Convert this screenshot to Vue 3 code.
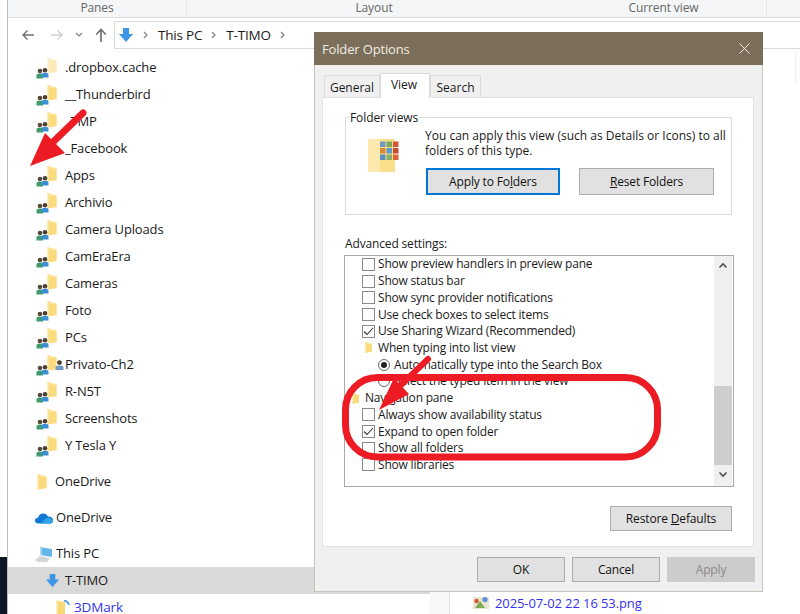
<script setup>
const shared = ['.dropbox.cache','__Thunderbird','_TMP','_Facebook','Apps','Archivio','Camera Uploads','CamEraEra','Cameras','Foto','PCs','Privato-Ch2','R-N5T','Screenshots','Y Tesla Y']
const settings = [
  { t: 'Show preview handlers in preview pane', k: 'box' },
  { t: 'Show status bar', k: 'box' },
  { t: 'Show sync provider notifications', k: 'box' },
  { t: 'Use check boxes to select items', k: 'box' },
  { t: 'Use Sharing Wizard (Recommended)', k: 'check' },
  { t: 'When typing into list view', k: 'folder' },
  { t: 'Automatically type into the Search Box', k: 'radioOn' },
  { t: 'Select the typed item in the view', k: 'radio' },
  { t: 'Navigation pane', k: 'head' },
  { t: 'Always show availability status', k: 'box' },
  { t: 'Expand to open folder', k: 'check' },
  { t: 'Show all folders', k: 'box' },
  { t: 'Show libraries', k: 'box' }
]
const thumbs = [
  ['#6f9cc6', '#7aa860', '#d6543a'],
  ['#d98a3a', '#5e9ac6', '#c94a32'],
  ['#5f8fc0', '#86b06a', '#d8663c']
]
</script>

<template>
  <div class="screen">
    <svg class="defs" width="0" height="0">
      <symbol id="folder" viewBox="0 0 11 16">
        <path d="M1 0.5 L10.5 2 V14 L1 15.5 Z" fill="#fde49a" />
        <path d="M1 0.5 L4 0.5 V3 L10.5 3.5 V14 L1 15.5 Z" fill="#f9da7c" />
        <path d="M1 0.5 L2.5 1 V15 L1 15.5 Z" fill="#fdeeb8" />
      </symbol>
      <symbol id="people" viewBox="0 0 13 12">
        <circle cx="4" cy="4" r="2.3" fill="#5b4a3a" />
        <path d="M0.5 11.5 V8.5 Q0.5 6.5 4 6.5 Q7 6.5 7 8.5 V11.5 Z" fill="#3f9a6a" />
        <circle cx="9" cy="3.2" r="2.3" fill="#4a4038" />
        <path d="M5.5 10.5 V7.8 Q5.5 5.8 9 5.8 Q12.5 5.8 12.5 7.8 V10.5 Z" fill="#3c8fd0" />
      </symbol>
      <symbol id="drive" viewBox="0 0 16 16">
        <path d="M5 1 H11 V7 H15 L8 15 L1 7 H5 Z" fill="#3e96e6" />
      </symbol>
    </svg>

    <div class="strip"><div class="strip-dark"></div></div>

    <div class="window">
      <div class="ribbon">
        <div class="rib rib-a">Panes</div>
        <div class="rib rib-b">Layout</div>
        <div class="rib rib-c">Current view</div>
      </div>

      <div class="navbar">
        <svg class="nav-ic" width="14" height="12" viewBox="0 0 14 12"><path d="M13 6 H2 M6.5 1.5 L2 6 L6.5 10.5" fill="none" stroke="#707070" stroke-width="1.4" /></svg>
        <svg class="nav-ic fwd" width="14" height="12" viewBox="0 0 14 12"><path d="M1 6 H12 M7.5 1.5 L12 6 L7.5 10.5" fill="none" stroke="#cfcfcf" stroke-width="1.4" /></svg>
        <svg class="nav-ic chev" width="8" height="6" viewBox="0 0 8 6"><path d="M1 1 L4 4 L7 1" fill="none" stroke="#808080" stroke-width="1.2" /></svg>
        <svg class="nav-ic up" width="12" height="14" viewBox="0 0 12 14"><path d="M6 14 V2 M1.2 6.5 L6 1.5 L10.8 6.5" fill="none" stroke="#707070" stroke-width="1.7" /></svg>
        <div class="address">
          <svg class="addr-ic" width="16" height="16"><use href="#drive" /></svg>
          <svg class="sep" width="6" height="8" viewBox="0 0 6 8"><path d="M1 1 L4 4 L1 7" fill="none" stroke="#808080" stroke-width="1.2" /></svg>
          <span>This PC</span>
          <svg class="sep" width="6" height="8" viewBox="0 0 6 8"><path d="M1 1 L4 4 L1 7" fill="none" stroke="#808080" stroke-width="1.2" /></svg>
          <span>T-TIMO</span>
          <svg class="sep" width="6" height="8" viewBox="0 0 6 8"><path d="M1 1 L4 4 L1 7" fill="none" stroke="#808080" stroke-width="1.2" /></svg>
        </div>
      </div>

      <div class="main">
        <div class="tree">
          <div v-for="(n, i) in shared" :key="n" class="row row-shared" :class="{ ghost: i === 0 }">
            <span class="ic-shared">
              <svg class="f" width="11" height="16"><use href="#folder" /></svg>
              <svg class="p" width="13" height="12"><use href="#people" /></svg>
              <svg v-if="n === 'Privato-Ch2'" class="p2" width="9" height="10" viewBox="0 0 9 10">
                <circle cx="4.5" cy="2.6" r="2.4" fill="#4a4038" />
                <path d="M0.5 10 V7.5 Q0.5 5.5 4.5 5.5 Q8.5 5.5 8.5 7.5 V10 Z" fill="#6f9ac4" />
              </svg>
            </span>
            <span>{{ n }}</span>
          </div>
          <div class="row row-top gap-a">
            <svg class="ic-top" width="11" height="16"><use href="#folder" /></svg>
            <span>OneDrive</span>
          </div>
          <div class="row row-top gap-a">
            <svg class="ic-cloud" width="18" height="12" viewBox="0 0 18 12">
              <path d="M3.5 11.5 Q0 11.5 0 8.5 Q0 6 3 5.8 Q4.5 1 9 1.5 Q12 2 13 4.5 Q18 4.5 18 8.5 Q18 11.5 15 11.5 Z" fill="#0f78d4" />
              <path d="M6 11.5 L11 6 Q15 4.5 18 8.5 Q18 11.5 15 11.5 Z" fill="#2fa3ea" />
            </svg>
            <span>OneDrive</span>
          </div>
          <div class="row row-top gap-a">
            <svg class="ic-pc" width="18" height="16" viewBox="0 0 18 16">
              <path d="M5 1 L17 3 V11 L5 9 Z" fill="#67b6ea" />
              <path d="M5 1 L7 1.3 V9.3 L5 9 Z" fill="#a7d7f3" />
              <path d="M0 14 L5 10 L15 12 L12 16 H3 Z" fill="#d3d6d9" />
            </svg>
            <span>This PC</span>
          </div>
          <div class="row row-sel">
            <svg class="ic-drive" width="15" height="15"><use href="#drive" /></svg>
            <span>T-TIMO</span>
          </div>
          <div class="row row-link">
            <svg class="f" width="15" height="16" viewBox="0 0 15 16">
              <path d="M1 0.5 L10 2 V14 L1 15.5 Z" fill="#f8d775" />
              <path d="M1 0.5 L2.5 1 V15 L1 15.5 Z" fill="#fdeeb8" />
              <path d="M9 0.5 Q13 1 14 5" stroke="#3e96e6" stroke-width="1.6" fill="none" />
            </svg>
            <span>3DMark</span>
          </div>
        </div>
        <div class="tree-gutter"></div>
        <div class="files">
          <div class="top-line"></div>
          <div class="file">
            <svg width="16" height="14" viewBox="0 0 16 14">
              <rect x="0" y="1" width="16" height="12" fill="#e8e4d2" />
              <path d="M2 12 L7 5 L12 12 Z" fill="#7fa84f" />
              <circle cx="3.5" cy="5" r="2.2" fill="#d8552c" />
              <circle cx="12" cy="3.5" r="2.6" fill="#5f8fd8" />
            </svg>
            <span>2025-07-02 22 16 53.png</span>
          </div>
        </div>
      </div>
    </div>

    <div class="dialog">
      <div class="title">
        <span>Folder Options</span>
        <svg width="11" height="11" viewBox="0 0 11 11"><path d="M0.5 0.5 L10.5 10.5 M10.5 0.5 L0.5 10.5" stroke="#efeae0" stroke-width="1" /></svg>
      </div>
      <div class="tabs">
        <div class="tab">General</div>
        <div class="tab tab-on">View</div>
        <div class="tab">Search</div>
      </div>
      <div class="panel">
        <div class="group">
          <div class="legend">Folder views</div>
          <div class="group-body">
            <svg class="gicon" width="32" height="34" viewBox="0 0 32 34">
              <rect x="0" y="1" width="27" height="33" fill="#fbe08c" />
              <rect x="0" y="1" width="12" height="33" fill="#fde9ad" />
              <g v-for="(r, ri) in thumbs" :key="ri">
                <rect v-for="(c, ci) in r" :key="ci" :x="12 + ci * 6.5" :y="3.5 + ri * 6.5" width="5.5" height="5.5" :fill="c" />
              </g>
            </svg>
            <div class="gtext">
              <p>You can apply this view (such as Details or Icons) to all<br />folders of this type.</p>
              <div class="gbtns">
                <button class="btn btn-wide btn-def">Apply to Fo<u>l</u>ders</button>
                <button class="btn btn-wide"><u>R</u>eset Folders</button>
              </div>
            </div>
          </div>
        </div>
        <div class="adv">Advanced settings:</div>
        <div class="list">
          <div class="items">
            <div v-for="s in settings" :key="s.t" class="item" :class="'k-' + s.k">
              <span v-if="s.k === 'box' || s.k === 'check'" class="cb">
                <svg v-if="s.k === 'check'" width="11" height="9" viewBox="0 0 11 9"><path d="M1 4.5 L4 7.5 L10 1" fill="none" stroke="#333" stroke-width="1.1" /></svg>
              </span>
              <svg v-else-if="s.k === 'folder' || s.k === 'head'" class="mini" width="9" height="11"><use href="#folder" /></svg>
              <span v-else class="rb" :class="{ on: s.k === 'radioOn' }"></span>
              <span>{{ s.t }}</span>
            </div>
          </div>
          <div class="sb">
            <svg width="10" height="7" viewBox="0 0 10 7"><path d="M1.5 5.5 L5 2 L8.5 5.5" fill="none" stroke="#505050" stroke-width="1.6" /></svg>
            <div class="sb-track"><div class="sb-thumb"></div></div>
            <svg width="10" height="7" viewBox="0 0 10 7"><path d="M1.5 1.5 L5 5 L8.5 1.5" fill="none" stroke="#505050" stroke-width="1.6" /></svg>
          </div>
        </div>
        <div class="restore"><button class="btn btn-restore">Restore <u>D</u>efaults</button></div>
      </div>
      <div class="foot">
        <button class="btn btn-foot">OK</button>
        <button class="btn btn-foot">Cancel</button>
        <button class="btn btn-foot btn-off">Apply</button>
      </div>
    </div>

    <svg class="marks" width="800" height="614" viewBox="0 0 800 614">
      <path d="M83 113 L52 143" stroke="#ed1c24" stroke-width="7" stroke-linecap="round" fill="none" />
      <path d="M30 166 L45 133 L65 153 Z" fill="#ed1c24" />
      <path d="M428 359 L400 386" stroke="#ed1c24" stroke-width="6" stroke-linecap="round" fill="none" />
      <path d="M379 410 L394 378 L409 394 Z" fill="#ed1c24" />
      <rect x="345.5" y="377.5" width="312" height="79.5" rx="32" ry="32" fill="none" stroke="#ed1c24" stroke-width="7" />
    </svg>
  </div>
</template>

<style>
html, body { margin: 0; background: #fff; }
</style>

<style scoped>
.screen {
  position: relative;
  width: 800px;
  height: 614px;
  overflow: hidden;
  display: flex;
  background: #fff;
  font-family: "Open Sans", "Noto Sans", sans-serif;
  color: #1a1a1a;
}
.defs { position: absolute; }
.strip { width: 7px; display: flex; flex-direction: column; justify-content: flex-end; flex: none; }
.strip-dark { height: 57px; background: #0e1628; }
.window { flex: 1; min-width: 0; display: flex; flex-direction: column; border-left: 1px solid #bdbdbd; }

.ribbon {
  height: 17px;
  display: flex;
  background: #f5f6f7;
  border-bottom: 1px solid #dedede;
  font-size: 12px;
  letter-spacing: -0.1px;
  color: #666;
  line-height: 16px;
}
.rib { text-align: center; border-right: 1px solid #e8e8e8; flex: none; }
.rib-a { width: 178px; }
.rib-b { width: 374px; border-right: 0; }
.rib-c { width: 205px; }

.navbar {
  height: 32px;
  box-sizing: border-box;
  padding-top: 2px;
  display: flex;
  align-items: center;
}
.nav-ic { flex: none; }
.nav-ic:first-child { margin-left: 13px; }
.fwd { margin-left: 15px; }
.chev { margin-left: 11px; }
.up { margin-left: 12px; }
.address {
  margin-left: 7px;
  height: 26px;
  flex: 1;
  display: flex;
  align-items: center;
  border: 1px solid #d9d9d9;
  border-right: 0;
  font-size: 13.5px;
  letter-spacing: -0.2px;
}
.addr-ic { margin-left: 3px; }
.sep { margin: 0 9px 0 9px; }

.main { flex: 1; min-height: 0; display: flex; }
.tree { width: 422px; flex: none; padding-top: 4px; font-size: 13px; letter-spacing: -0.15px; line-height: 27px; }
.row { height: 27px; display: flex; align-items: center; white-space: nowrap; }
.row-shared { padding-left: 28px; }
.ghost .f { opacity: 0.55; }
.ic-shared { position: relative; width: 29px; height: 27px; flex: none; }
.ic-shared .f { position: absolute; left: 10px; top: 4px; }
.ic-shared .p { position: absolute; left: 0; top: 13px; }
.ic-shared .p2 { position: absolute; left: 19px; top: 9px; }
.row-top { padding-left: 27px; }
.gap-a { margin-top: 9px; }
.ic-top { margin: 0 8px 0 1px; }
.ic-cloud { margin: 0 3px 0 0; }
.ic-pc { margin: 0 3px 0 0; }
.row-sel { background: #d9d9d9; padding-left: 37px; }
.ic-drive { margin-right: 5px; }
.row-link { padding-left: 47px; color: #3333f0; font-size: 13.5px; }
.row-link .f { margin-right: 4px; }
.tree-gutter { width: 19px; flex: none; background: #f7f7f7; }
.files { flex: 1; display: flex; flex-direction: column; justify-content: space-between; font-size: 13px; letter-spacing: -0.1px; color: #3333f0; border-left: 1px solid #e4e4e4; }
.top-line { margin: 2px 0 0 345px; width: 1px; height: 32px; background: #f0f0f0; }
.file { display: flex; align-items: center; gap: 6px; padding: 0 0 2px 23px; white-space: nowrap; }

.dialog {
  position: absolute;
  left: 314px;
  top: 32px;
  width: 449px;
  height: 560px;
  box-sizing: border-box;
  background: #f0f0f0;
  border: 1px solid #c8c4ba;
  border-top: 0;
  display: flex;
  flex-direction: column;
  font-size: 12px;
}
.title {
  height: 33px;
  margin: 0 -1px;
  flex: none;
  background: #7b6f5b;
  color: #f0ece2;
  display: flex;
  align-items: center;
  justify-content: space-between;
  padding: 0 13px 0 8px;
  font-size: 13px;
  letter-spacing: -0.15px;
}
.tabs { display: flex; align-items: flex-end; padding: 8px 0 0 9px; height: 24px; flex: none; }
.tab {
  height: 22px;
  line-height: 24px;
  border: 1px solid #dcdcdc;
  border-bottom: 0;
  box-sizing: border-box;
  background: #f0f0f0;
  text-align: center;
}
.tab:nth-child(1) { width: 56px; }
.tab:nth-child(3) { width: 51px; }
.tab-on { height: 25px; line-height: 21px; width: 50px; padding-right: 2px; background: #fff; position: relative; z-index: 1; margin-bottom: -1px; }
.panel {
  height: 450px;
  margin: 0 8px 0 7px;
  flex: none;
  box-sizing: border-box;
  background: #fff;
  border: 1px solid #e2e2e2;
  padding: 19px 21px 0 22px;
  display: flex;
  flex-direction: column;
}
.group { height: 98px; box-sizing: border-box; border: 1px solid #dcdcdc; flex: none; }
.legend { margin: -9px 0 0 3px; width: max-content; background: #fff; padding: 0 1px; line-height: 17px; height: 17px; letter-spacing: -0.1px; }
.group-body { display: flex; }
.gicon { margin: 12px 0 0 22px; flex: none; }
.gtext { margin-left: 25px; }
.gtext p { margin: 2px 0 0; line-height: 15px; white-space: nowrap; }
.gbtns { display: flex; gap: 19px; margin: 10px 0 0 1px; }
.btn {
  font: inherit;
  letter-spacing: -0.15px;
  color: #111;
  background: #e1e1e1;
  border: 1px solid #adadad;
  padding: 0;
  box-sizing: border-box;
}
.btn-wide { width: 135px; height: 27px; }
.btn-def { width: 134px; border: 2px solid #0078d7; }
.adv { margin-top: 20px; line-height: 17px; height: 17px; flex: none; letter-spacing: -0.15px; }
.list {
  margin: 3px 0 0 -1px;
  height: 232px;
  width: 390px;
  flex: none;
  box-sizing: border-box;
  border: 1px solid #a9a9a9;
  display: flex;
  justify-content: space-between;
  overflow: hidden;
}
.items { padding: 0 0 0 17px; letter-spacing: -0.2px; }
.item { height: 16.72px; display: flex; align-items: center; white-space: nowrap; line-height: 16px; }
.cb { width: 13px; height: 13px; box-sizing: border-box; border: 1px solid #8a8a8a; background: #fff; margin-right: 3px; display: flex; align-items: center; justify-content: center; flex: none; }
.mini { margin: 0 5px 0 2px; flex: none; }
.k-head .mini { margin: 0 5px 0 -11px; }
.rb { width: 12px; height: 12px; box-sizing: border-box; border: 1px solid #6a6a6a; border-radius: 50%; background: #fff; margin: 0 4px 0 16px; display: flex; align-items: center; justify-content: center; flex: none; }
.rb.on::after { content: ""; width: 6px; height: 6px; border-radius: 50%; background: #222; }
.sb { width: 18px; margin-right: 1px; background: #f0f0f0; display: flex; flex-direction: column; align-items: center; flex: none; padding: 6px 0 8px; box-sizing: border-box; }
.sb-track { flex: 1; width: 18px; display: flex; flex-direction: column; justify-content: flex-end; padding: 6px 0; box-sizing: border-box; }
.sb-thumb { height: 79px; background: #cdcdcd; }
.restore { display: flex; justify-content: flex-end; margin-top: 19px; }
.btn-restore { width: 122px; height: 25px; }
.foot { display: flex; justify-content: flex-end; gap: 7px; padding: 10px 7px 0 0; }
.btn-foot { width: 88px; height: 25px; }
.btn-off { background: #cccccc; color: #8a8a8a; border-color: #cccccc; }

.marks { position: absolute; left: 0; top: 0; pointer-events: none; }
</style>
